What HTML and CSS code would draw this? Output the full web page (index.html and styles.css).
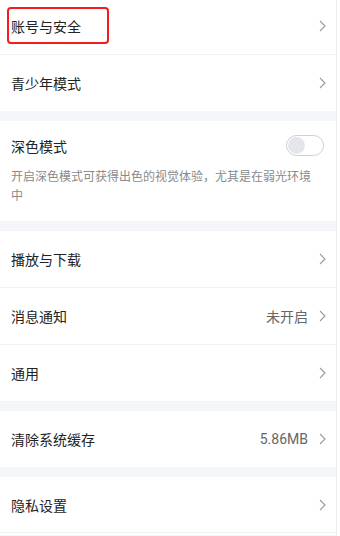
FILE: index.html
```html
<!DOCTYPE html>
<html lang="zh-CN">
<head>
    <meta charset="UTF-8">
    <meta name="viewport" content="width=device-width, initial-scale=1.0">
    <title>设置</title>
    <link rel="stylesheet" href="styles.css">
</head>
<body>
    <div class="page">
        <div class="group group-first">
            <div class="row">
                <span class="row-title">账号与安全</span>
                <svg class="chevron" width="7" height="12" viewBox="0 0 7 12"><polyline points="1,1 6,6 1,11" fill="none" stroke="#9a9a9a" stroke-width="1.1"/></svg>
                <div class="highlight"></div>
            </div>
            <div class="row">
                <span class="row-title">青少年模式</span>
                <svg class="chevron" width="7" height="12" viewBox="0 0 7 12"><polyline points="1,1 6,6 1,11" fill="none" stroke="#9a9a9a" stroke-width="1.1"/></svg>
            </div>
        </div>

        <div class="group dark-mode">
            <div class="dark-head">
                <span class="row-title">深色模式</span>
                <div class="switch"><span class="switch-knob"></span></div>
            </div>
            <p class="dark-desc">开启深色模式可获得出色的视觉体验，尤其是在弱光环境中</p>
        </div>

        <div class="group">
            <div class="row">
                <span class="row-title">播放与下载</span>
                <svg class="chevron" width="7" height="12" viewBox="0 0 7 12"><polyline points="1,1 6,6 1,11" fill="none" stroke="#9a9a9a" stroke-width="1.1"/></svg>
            </div>
            <div class="row">
                <span class="row-title">消息通知</span>
                <span class="row-value">未开启</span>
                <svg class="chevron" width="7" height="12" viewBox="0 0 7 12"><polyline points="1,1 6,6 1,11" fill="none" stroke="#9a9a9a" stroke-width="1.1"/></svg>
            </div>
            <div class="row">
                <span class="row-title">通用</span>
                <svg class="chevron" width="7" height="12" viewBox="0 0 7 12"><polyline points="1,1 6,6 1,11" fill="none" stroke="#9a9a9a" stroke-width="1.1"/></svg>
            </div>
        </div>

        <div class="group">
            <div class="row">
                <span class="row-title">清除系统缓存</span>
                <span class="row-value">5.86MB</span>
                <svg class="chevron" width="7" height="12" viewBox="0 0 7 12"><polyline points="1,1 6,6 1,11" fill="none" stroke="#9a9a9a" stroke-width="1.1"/></svg>
            </div>
        </div>

        <div class="group group-last">
            <div class="row">
                <span class="row-title">隐私设置</span>
                <svg class="chevron" width="7" height="12" viewBox="0 0 7 12"><polyline points="1,1 6,6 1,11" fill="none" stroke="#9a9a9a" stroke-width="1.1"/></svg>
            </div>
        </div>
    </div>
</body>
</html>
```

FILE: styles.css
```css
* {
    margin: 0;
    padding: 0;
    box-sizing: border-box;
    font-family: Roboto, "Noto Sans CJK SC", sans-serif;
}

body {
    background-color: #ffffff;
    height: 536px;
    overflow: hidden;
}

.page {
    width: 337px;
    height: 536px;
    overflow: hidden;
    background-color: #f4f6f9;
    border-right: 1px solid #e9ebee;
}

.group {
    background-color: #ffffff;
    margin-bottom: 10px;
}

.group-first {
    margin-top: -2px;
}

.group-last {
    margin-bottom: 0;
    padding-bottom: 2px;
}

.group-last .row {
    border-bottom: 1px solid #f0f1f3;
}

.row {
    position: relative;
    display: flex;
    align-items: center;
    height: 56px;
    padding: 0 10px 0 11px;
}

.row + .row {
    height: 57px;
    border-top: 1px solid #f0f1f3;
}

.row-title {
    flex: 1;
    font-size: 14px;
    color: #222222;
}

.row-value {
    font-size: 14px;
    color: #666666;
    margin-right: 11px;
}

.chevron {
    flex-shrink: 0;
}

.highlight {
    position: absolute;
    left: 7px;
    top: 9px;
    width: 102px;
    height: 37px;
    border: 2.5px solid #f41c1c;
    border-radius: 4px;
}

.dark-mode {
    height: 100px;
    padding: 14px 11px 0 11px;
}

.dark-head {
    display: flex;
    align-items: center;
    justify-content: space-between;
    height: 21px;
}

.switch {
    width: 38px;
    height: 21px;
    border: 1px solid #cdd0d4;
    border-radius: 11px;
    background-color: #ffffff;
    padding: 1px;
    margin-right: 1px;
}

.switch-knob {
    display: block;
    width: 17px;
    height: 17px;
    border-radius: 50%;
    background-color: #e4e6ea;
}

.dark-desc {
    margin-top: 12px;
    padding-right: 12px;
    font-size: 12px;
    line-height: 19px;
    color: #8a8a8a;
}
```
